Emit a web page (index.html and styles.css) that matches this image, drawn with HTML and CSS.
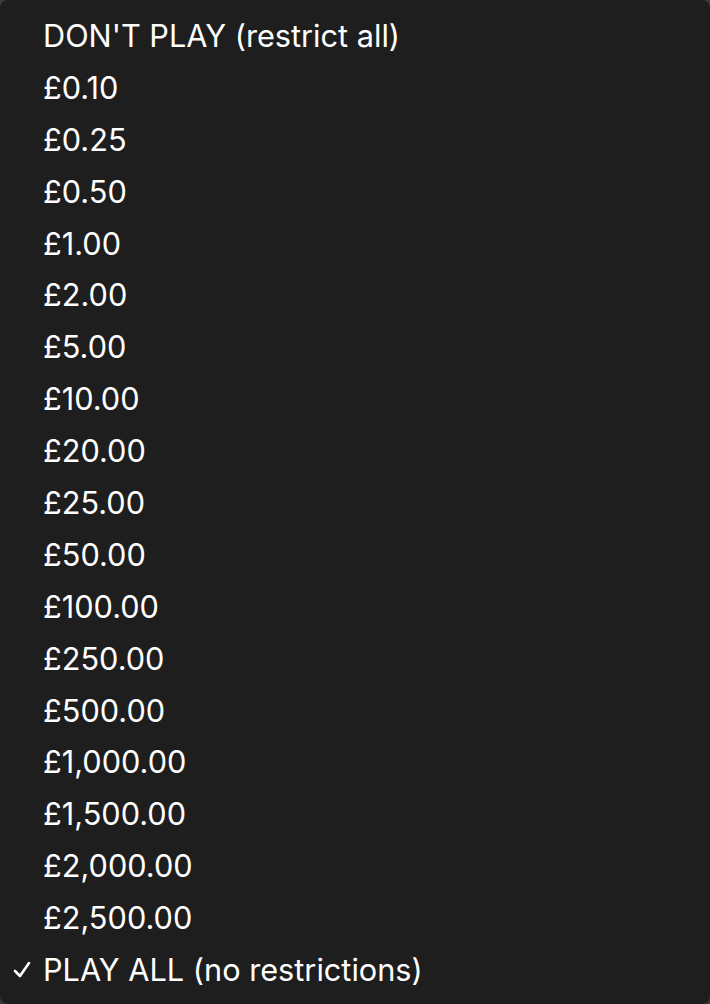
FILE: index.html
```html
<!DOCTYPE html>
<html lang="en">
<head>
    <meta charset="UTF-8">
    <meta name="viewport" content="width=device-width, initial-scale=1.0">
    <title>Stake limit</title>
    <link rel="stylesheet" href="styles.css">
</head>
<body>
    <ul class="menu">
        <li class="item">DON'T PLAY (restrict all)</li>
        <li class="item">£0.10</li>
        <li class="item">£0.25</li>
        <li class="item">£0.50</li>
        <li class="item">£1.00</li>
        <li class="item">£2.00</li>
        <li class="item">£5.00</li>
        <li class="item">£10.00</li>
        <li class="item">£20.00</li>
        <li class="item">£25.00</li>
        <li class="item">£50.00</li>
        <li class="item">£100.00</li>
        <li class="item">£250.00</li>
        <li class="item">£500.00</li>
        <li class="item">£1,000.00</li>
        <li class="item">£1,500.00</li>
        <li class="item">£2,000.00</li>
        <li class="item">£2,500.00</li>
        <li class="item checked">
            <svg class="check" width="18" height="18" viewBox="0 0 18 18"><polyline points="2,10 7,15 16,2" fill="none" stroke="#fff" stroke-width="2.6" stroke-linecap="round" stroke-linejoin="round"/></svg>PLAY ALL (no restrictions)
        </li>
    </ul>
</body>
</html>
```

FILE: styles.css
```css
html, body {
    margin: 0;
    height: 100%;
    background: #3a3a3a;
}
.menu {
    list-style: none;
    margin: 0;
    padding: 10px 0 0;
    height: 1004px;
    box-sizing: border-box;
    background: #1e1e1e;
    border-radius: 8px;
    font-family: Inter, "Open Sans", sans-serif;
    font-size: 30.7px;
    color: #ffffff;
}
.item {
    position: relative;
    height: 51.9px;
    line-height: 51.9px;
    padding-left: 43px;
    white-space: nowrap;
}
.check {
    position: absolute;
    left: 13px;
    top: 17px;
}
```
